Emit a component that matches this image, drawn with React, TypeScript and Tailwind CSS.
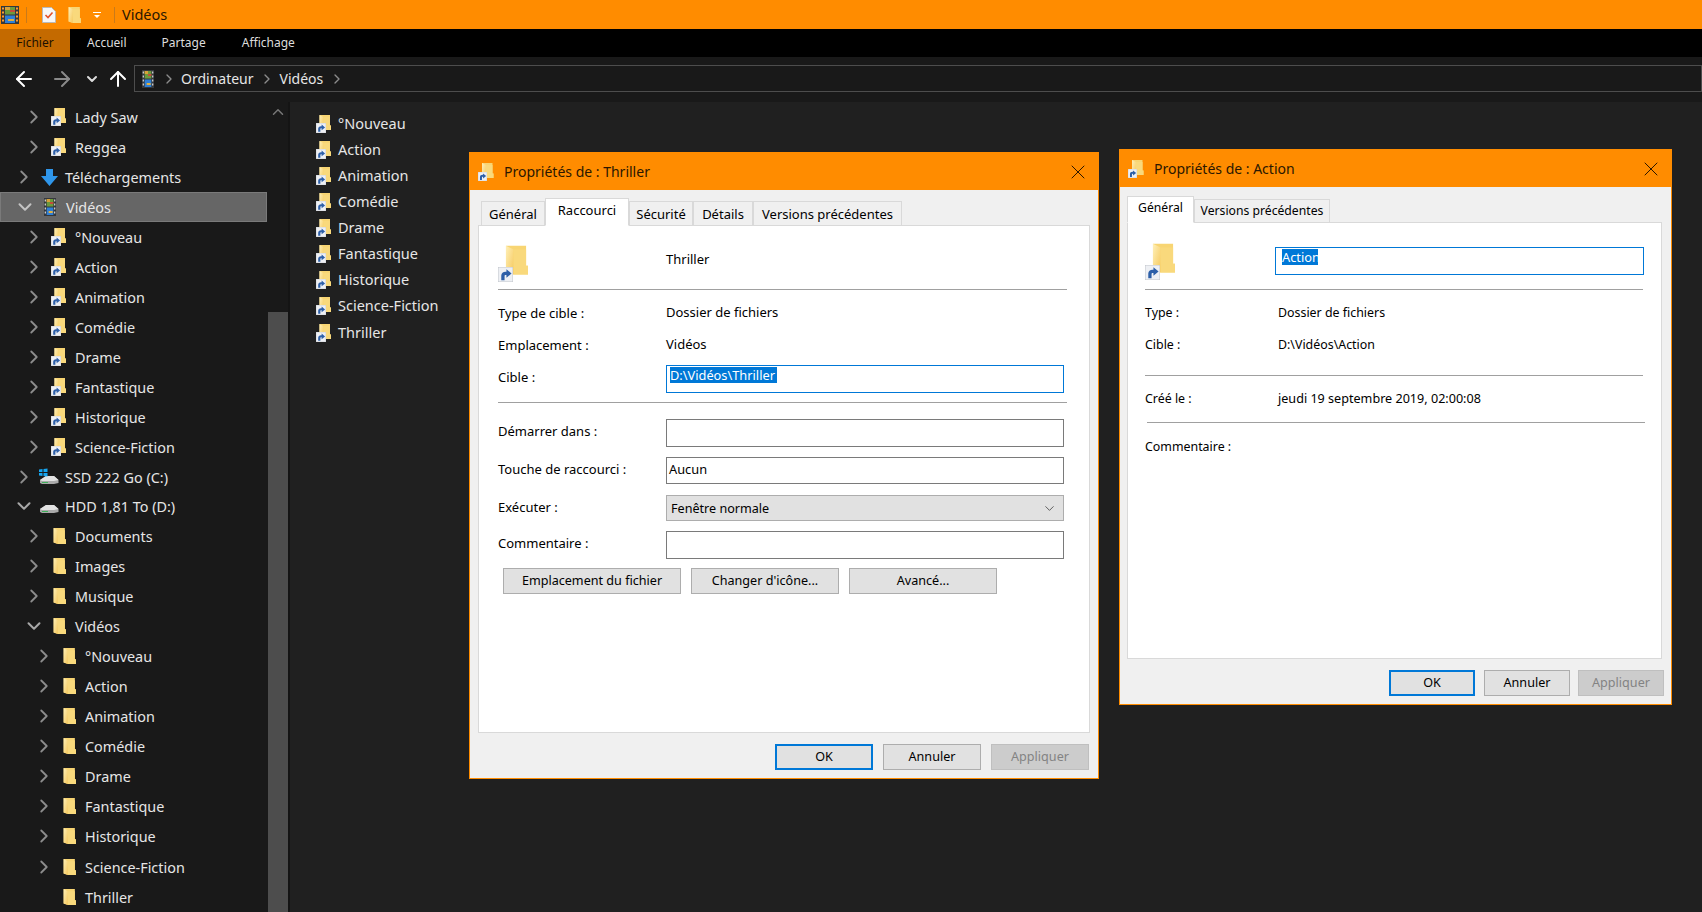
import { ArrowLeft, ArrowRight, ArrowUp, ChevronDown, ChevronRight, ChevronUp, X } from 'lucide-react';

const FONT = "font-['Noto_Sans','Open_Sans',sans-serif]";

// ── Icons ───────────────────────────────────────────────
function FolderIcon({ className }: { className: string }) {
	return (
		<svg viewBox="0 0 24 30" className={className}>
			<defs>
				<linearGradient id="fold" x1="0" x2="1" y1="0" y2="1">
					<stop offset="0" stopColor="#fff0b8" />
					<stop offset="1" stopColor="#f5c85c" />
				</linearGradient>
			</defs>
			<path d="M1 0H22V21H24V30H9L1 27Z" fill="#f8d573" />
			<path d="M1 0L9 4V30L1 27Z" fill="url(#fold)" />
			<path d="M9 4H22V21H24V30H9Z" fill="#f9d97c" />
		</svg>
	);
}

function ShortcutBadge({ className }: { className: string }) {
	return (
		<svg viewBox="0 0 16 16" className={className}>
			<rect width="16" height="16" fill="#eef0f4" stroke="#bfc3c9" />
			<path d="M3.5 14V9C3.5 6.5 5.5 5 8 5H9V2.5L14.5 7L9 11.5V8.5H8C7.3 8.5 7 9 7 10V14Z" fill="#2d5fa8" />
		</svg>
	);
}

function FolderLink() {
	return (
		<span className="relative block h-[18px] w-[16px]">
			<FolderIcon className="absolute top-0 left-[3px] h-[15px] w-[12px]" />
			<ShortcutBadge className="absolute bottom-0 left-0 h-[10px] w-[10px]" />
		</span>
	);
}

function BigFolderLink() {
	return (
		<span className="relative block h-[37px] w-[30px]">
			<FolderIcon className="absolute top-0 left-[7px] h-[30px] w-[23px]" />
			<ShortcutBadge className="absolute bottom-0 left-0 h-[15px] w-[15px]" />
		</span>
	);
}

function DialogFolderIcon() {
	return (
		<span className="relative block h-[18px] w-[16px]">
			<FolderIcon className="absolute top-0 left-[3px] h-[15px] w-[13px]" />
			<ShortcutBadge className="absolute bottom-0 left-0 h-[9px] w-[9px]" />
		</span>
	);
}

function FilmIcon({ className }: { className: string }) {
	return (
		<svg viewBox="0 0 18 18" preserveAspectRatio="none" className={className}>
			<rect width="18" height="18" fill="#35383c" />
			<rect x="4" y="1" width="10" height="7.5" fill="#6c9a3c" />
			<rect x="4" y="1" width="5" height="3" fill="#d8a13a" />
			<rect x="9" y="4" width="5" height="2" fill="#c44d3a" />
			<rect x="4" y="9.5" width="10" height="7.5" fill="#2f7fd6" />
			<rect x="7" y="13" width="6" height="2" fill="#e0b040" />
			<path d="M1 1.5h2v2H1zM1 5.5h2v2H1zM1 9.5h2v2H1zM1 13.5h2v2H1zM15 1.5h2v2h-2zM15 5.5h2v2h-2zM15 9.5h2v2h-2zM15 13.5h2v2h-2z" fill="currentColor" />
		</svg>
	);
}

function DriveIcon({ windows }: { windows?: boolean }) {
	return (
		<svg viewBox="0 0 20 18" className="h-[18px] w-[20px]">
			<path d="M1 12L7 8H15L19.5 12V15L15 16H3L1 15Z" fill="#a9a9a9" />
			<path d="M1 12L7 8H15L19.5 12L15 13H3Z" fill="#e2e2e2" />
			<path d="M3 14H9V15H3Z" fill="#3fae5a" />
			{windows && <path d="M0 1.5L3.5 1V4H0ZM4.5 1L8.5 .5V4H4.5ZM0 5H3.5V8L0 7.5ZM4.5 5H8.5V8.5L4.5 8Z" fill="#16a5f0" />}
		</svg>
	);
}

function DownloadIcon() {
	return (
		<svg viewBox="0 0 17 17" className="h-[17px] w-[17px]">
			<path d="M5 0H12V7H17L8.5 17L0 7H5Z" fill="#2f96ea" />
		</svg>
	);
}

// ── Explorer tree ───────────────────────────────────────
type Row = {
	label: string;
	level: 0 | 1 | 2;
	icon: 'link' | 'folder' | 'dl' | 'film' | 'ssd' | 'hdd';
	open?: boolean;
	leaf?: boolean;
	selected?: boolean;
	height?: string;
};

const tree: Row[] = [
	{ label: 'Lady Saw', level: 1, icon: 'link' },
	{ label: 'Reggea', level: 1, icon: 'link' },
	{ label: 'Téléchargements', level: 0, icon: 'dl' },
	{ label: 'Vidéos', level: 0, icon: 'film', open: true, selected: true },
	{ label: '°Nouveau', level: 1, icon: 'link' },
	{ label: 'Action', level: 1, icon: 'link' },
	{ label: 'Animation', level: 1, icon: 'link' },
	{ label: 'Comédie', level: 1, icon: 'link' },
	{ label: 'Drame', level: 1, icon: 'link' },
	{ label: 'Fantastique', level: 1, icon: 'link' },
	{ label: 'Historique', level: 1, icon: 'link' },
	{ label: 'Science-Fiction', level: 1, icon: 'link' },
	{ label: 'SSD 222 Go (C:)', level: 0, icon: 'ssd', height: 'h-[29px]' },
	{ label: 'HDD 1,81 To (D:)', level: 0, icon: 'hdd', open: true },
	{ label: 'Documents', level: 1, icon: 'folder' },
	{ label: 'Images', level: 1, icon: 'folder' },
	{ label: 'Musique', level: 1, icon: 'folder' },
	{ label: 'Vidéos', level: 1, icon: 'folder', open: true },
	{ label: '°Nouveau', level: 2, icon: 'folder' },
	{ label: 'Action', level: 2, icon: 'folder' },
	{ label: 'Animation', level: 2, icon: 'folder' },
	{ label: 'Comédie', level: 2, icon: 'folder' },
	{ label: 'Drame', level: 2, icon: 'folder' },
	{ label: 'Fantastique', level: 2, icon: 'folder' },
	{ label: 'Historique', level: 2, icon: 'folder' },
	{ label: 'Science-Fiction', level: 2, icon: 'folder', height: 'h-[31px]' },
	{ label: 'Thriller', level: 2, icon: 'folder', leaf: true }
];

const indent = { 0: 'pl-[13px]', 1: 'pl-[23px]', 2: 'pl-[33px]' };

function TreeRow({ row }: { row: Row }) {
	return (
		<div
			className={`flex shrink-0 items-center ${row.height ?? 'h-[30px]'} ${indent[row.level]} ${
				row.selected ? 'w-[267px] border border-[#7a7a7a] bg-[#666666] pl-[12px]' : ''
			}`}
		>
			<span className="flex w-[22px] justify-center text-[#8c8c8c]">
				{row.leaf ? null : row.open ? (
					<ChevronDown size={24} strokeWidth={2.2} className={row.selected ? 'text-[#c4c4c4]' : 'text-[#a8a8a8]'} />
				) : (
					<ChevronRight size={22} />
				)}
			</span>
			<span className="flex w-[30px] items-center justify-center pr-[2px]">
				{row.icon === 'link' && <FolderLink />}
				{row.icon === 'folder' && <FolderIcon className="h-[16px] w-[13px]" />}
				{row.icon === 'dl' && <DownloadIcon />}
				{row.icon === 'film' && <FilmIcon className="h-[18px] w-[12px] text-[#c9c9c9]" />}
				{row.icon === 'ssd' && <DriveIcon windows />}
				{row.icon === 'hdd' && <DriveIcon />}
			</span>
			<span className="mt-[2px] text-[14.4px] leading-[20px] text-[#e6e6e6]">{row.label}</span>
		</div>
	);
}

// ── Dialog parts ────────────────────────────────────────
function Tab({ label, active, className }: { label: string; active?: boolean; className: string }) {
	return (
		<div
			className={`-mb-px flex items-center justify-center border border-[#d9d9d9] text-black ${
				active ? 'z-10 border-b-white bg-white' : 'bg-[#f0f0f0]'
			} ${className}`}
		>
			{label}
		</div>
	);
}

function Btn({ label, kind, className }: { label: string; kind?: 'primary' | 'disabled'; className: string }) {
	const look =
		kind === 'primary'
			? 'border-2 border-[#0078d7] bg-[#e1e1e1] text-black'
			: kind === 'disabled'
				? 'border border-[#bfbfbf] bg-[#cccccc] text-[#838383]'
				: 'border border-[#adadad] bg-[#e1e1e1] text-black';
	return <div className={`flex h-[26px] items-center justify-center text-[12.6px] ${look} ${className}`}>{label}</div>;
}

function TitleBar({ title }: { title: string }) {
	return (
		<div className="flex h-[37px] shrink-0 items-center bg-[#ff8c00] pr-[8px] pl-[8px]">
			<DialogFolderIcon />
			<span className="ml-[10px] text-[14px] text-[#2b1700]">{title}</span>
			<X size={24} strokeWidth={1} className="ml-auto text-[#2b1700]" />
		</div>
	);
}

function Label({ children, className = '' }: { children: string; className?: string }) {
	return <span className={`block w-[168px] shrink-0 text-[13px] leading-[18px] text-black ${className}`}>{children}</span>;
}

function Field({ children }: { children?: React.ReactNode }) {
	return <div className="h-full w-[398px] border border-[#7a7a7a] bg-white pl-[2px] text-[12.8px] leading-[22px] text-black">{children}</div>;
}

function Selected({ text, width }: { text: string; width: string }) {
	return <span className={`mt-[1px] ml-[1px] block h-[16px] bg-[#0078d7] text-[12.8px] leading-[16px] text-white ${width}`}>{text}</span>;
}

function FieldRow({ label, className, children }: { label: string; className: string; children?: React.ReactNode }) {
	return (
		<div className={`flex ${className}`}>
			<Label className="pt-[3px]">{label}</Label>
			{children ?? <Field />}
		</div>
	);
}

function ThrillerDialog() {
	return (
		<div className="absolute top-[152px] left-[469px] flex h-[627px] w-[630px] flex-col border border-[#ff8c00] bg-[#f0f0f0]">
			<TitleBar title="Propriétés de : Thriller" />
			<div className="flex h-[35px] shrink-0 items-end pl-[11px] text-[13px]">
				<Tab label="Général" className="h-[25px] w-[64px] pt-[2px]" />
				<Tab label="Raccourci" active className="h-[28px] w-[84px] pb-[2px]" />
				<Tab label="Sécurité" className="h-[25px] w-[64px] pt-[2px]" />
				<Tab label="Détails" className="h-[25px] w-[60px] pt-[2px]" />
				<Tab label="Versions précédentes" className="h-[25px] w-[149px] pt-[2px]" />
			</div>
			<div className="mx-[8px] h-[508px] shrink-0 border border-[#d9d9d9] bg-white pt-[19px] pl-[19px]">
				<div className="flex h-[44px]">
					<div className="w-[168px]">
						<BigFolderLink />
					</div>
					<span className="pt-[5px] text-[13px] leading-[18px] text-black">Thriller</span>
				</div>
				<div className="h-px w-[569px] bg-[#a0a0a0]" />
				<div className="mt-[7px] flex h-[32px] items-center">
					<Label>Type de cible :</Label>
					<span className="text-[13px] text-black">Dossier de fichiers</span>
				</div>
				<div className="flex h-[32px] items-center">
					<Label>Emplacement :</Label>
					<span className="text-[13px] text-black">Vidéos</span>
				</div>
				<div className="mt-[4px] flex h-[28px]">
					<Label className="pt-[3px]">Cible :</Label>
					<div className="h-full w-[398px] border border-[#0078d7] bg-white pl-[2px]">
						<Selected text="D:\Vidéos\Thriller" width="w-[107px]" />
					</div>
				</div>
				<div className="mt-[9px] h-px w-[569px] bg-[#a0a0a0]" />
				<FieldRow label="Démarrer dans :" className="mt-[16px] h-[28px]" />
				<FieldRow label="Touche de raccourci :" className="mt-[10px] h-[27px]">
					<Field>Aucun</Field>
				</FieldRow>
				<div className="mt-[11px] flex h-[26px]">
					<Label className="pt-[3px]">Exécuter :</Label>
					<div className="flex h-full w-[398px] items-center justify-between border border-[#adadad] bg-[#e1e1e1] pr-[6px] pl-[4px] text-[12.6px] text-black">
						<span className="mt-[2px]">Fenêtre normale</span>
						<ChevronDown size={15} strokeWidth={1.2} className="text-[#333333]" />
					</div>
				</div>
				<FieldRow label="Commentaire :" className="mt-[10px] h-[28px]" />
				<div className="mt-[9px] ml-[5px] flex gap-[10px]">
					<Btn label="Emplacement du fichier" className="w-[178px]" />
					<Btn label="Changer d'icône..." className="w-[148px]" />
					<Btn label="Avancé..." className="w-[148px]" />
				</div>
			</div>
			<div className="flex justify-end gap-[10px] pt-[11px] pr-[9px]">
				<Btn label="OK" kind="primary" className="w-[98px]" />
				<Btn label="Annuler" className="w-[98px]" />
				<Btn label="Appliquer" kind="disabled" className="w-[98px]" />
			</div>
		</div>
	);
}

function ActionDialog() {
	return (
		<div className="absolute top-[149px] left-[1119px] flex h-[556px] w-[553px] flex-col border border-[#ff8c00] bg-[#f0f0f0]">
			<TitleBar title="Propriétés de : Action" />
			<div className="flex h-[35px] shrink-0 items-end pl-[7px] text-[12.2px]">
				<Tab label="Général" active className="h-[27px] w-[67px] pb-[2px]" />
				<Tab label="Versions précédentes" className="h-[24px] w-[136px]" />
			</div>
			<div className="ml-[7px] h-[437px] w-[535px] shrink-0 border border-[#d9d9d9] bg-white pt-[20px] pl-[17px]">
				<div className="flex h-[46px]">
					<div className="w-[130px]">
						<BigFolderLink />
					</div>
					<div className="mt-[4px] h-[28px] w-[369px] border border-[#0078d7] bg-white pl-[5px]">
						<Selected text="Action" width="w-[36px]" />
					</div>
				</div>
				<div className="h-px w-[498px] bg-[#a0a0a0]" />
				<div className="flex h-[47px] items-center">
					<span className="w-[133px] text-[12.4px] text-black">Type :</span>
					<span className="text-[12.4px] text-black">Dossier de fichiers</span>
				</div>
				<div className="mt-px flex h-[14px] items-center">
					<span className="w-[133px] text-[12.4px] text-black">Cible :</span>
					<span className="text-[12.4px] text-black">D:\Vidéos\Action</span>
				</div>
				<div className="mt-[23px] h-px w-[498px] bg-[#a0a0a0]" />
				<div className="flex h-[46px] items-center">
					<span className="w-[133px] text-[12.4px] text-black">Créé le :</span>
					<span className="text-[12.6px] text-black">jeudi 19 septembre 2019, 02:00:08</span>
				</div>
				<div className="ml-[2px] h-px w-[498px] bg-[#a0a0a0]" />
				<div className="mt-[15px] text-[12.4px] leading-[18px] text-black">Commentaire :</div>
			</div>
			<div className="flex justify-end gap-[8px] pt-[11px] pr-[7px]">
				<Btn label="OK" kind="primary" className="mr-px w-[86px]" />
				<Btn label="Annuler" className="w-[86px]" />
				<Btn label="Appliquer" kind="disabled" className="w-[86px]" />
			</div>
		</div>
	);
}

const shortcuts = ['°Nouveau', 'Action', 'Animation', 'Comédie', 'Drame', 'Fantastique', 'Historique', 'Science-Fiction', 'Thriller'];

export default function App() {
	return (
		<div className={`relative flex h-[912px] w-[1702px] flex-col overflow-hidden bg-[#202020] ${FONT}`}>
			{/* title bar */}
			<div className="flex h-[29px] shrink-0 items-center bg-[#ff8c00] pl-[1px]">
				<FilmIcon className="h-[18px] w-[18px] text-[#ff9c30]" />
				<span className="ml-[7px] h-[16px] w-px bg-[#c97a1a]" />
				<svg viewBox="0 0 14 16" className="ml-[15px] h-[16px] w-[14px]">
					<path d="M.5.5H9.5L13.5 4.5V15.5H.5Z" fill="#f7f7f7" stroke="#b9b9b9" />
					<path d="M3.5 8L6 10.5L10.5 5.5" fill="none" stroke="#e2512a" strokeWidth="1.6" />
				</svg>
				<FolderIcon className="ml-[12px] h-[16px] w-[13px]" />
				<svg viewBox="0 0 8 8" className="ml-[12px] h-[8px] w-[8px]">
					<path d="M0 1H8V2H0ZM1 4H7L4 7Z" fill="#fff" />
				</svg>
				<span className="ml-[13px] h-[16px] w-px bg-[#c97a1a]" />
				<span className="ml-[7px] text-[14.5px] text-[#2b1700]">Vidéos</span>
			</div>

			{/* ribbon tabs */}
			<div className="flex h-[28px] shrink-0 items-center bg-black text-[12px] text-[#dddddd]">
				<span className="flex h-full w-[70px] items-center justify-center bg-[#c46a00] text-[#1c1000]">Fichier</span>
				<span className="ml-[17px]">Accueil</span>
				<span className="ml-[35px]">Partage</span>
				<span className="ml-[36px]">Affichage</span>
			</div>

			{/* address row */}
			<div className="flex h-[45px] shrink-0 items-center bg-[#191919] pb-[2px] pl-[12px]">
				<ArrowLeft size={24} className="text-white" />
				<ArrowRight size={24} className="ml-[14px] text-[#8a8a8a]" />
				<ChevronDown size={16} strokeWidth={3} className="ml-[10px] text-[#dddddd]" />
				<ArrowUp size={24} className="ml-[6px] text-white" />
				<div className="ml-[4px] flex h-[27px] flex-1 items-center border border-[#4d4d4d] pl-[7px] text-[14px] text-[#e6e6e6]">
					<FilmIcon className="h-[18px] w-[12px] text-[#c9c9c9]" />
					<ChevronRight size={16} className="ml-[7px] text-[#8c8c8c]" />
					<span className="ml-[4px]">Ordinateur</span>
					<ChevronRight size={16} className="ml-[5px] text-[#8c8c8c]" />
					<span className="ml-[5px]">Vidéos</span>
					<ChevronRight size={16} className="ml-[6px] text-[#8c8c8c]" />
				</div>
			</div>

			{/* body */}
			<div className="flex min-h-0 flex-1">
				<div className="flex w-[268px] shrink-0 flex-col overflow-hidden bg-[#191919]">
					{tree.map((row, i) => (
						<TreeRow key={i} row={row} />
					))}
				</div>
				<div className="flex w-[20px] shrink-0 flex-col bg-[#191919]">
					<div className="flex h-[210px] justify-center pt-[1px]">
						<ChevronUp size={18} className="text-[#777777]" />
					</div>
					<div className="w-full flex-1 bg-[#4d4d4d]" />
				</div>
				<div className="w-[2px] shrink-0 bg-[#141414]" />
				<div className="flex flex-1 flex-col pt-[9px] pl-[26px]">
					{shortcuts.map((name) => (
						<div key={name} className="flex h-[26px] items-center last:mt-px">
							<FolderLink />
							<span className="ml-[6px] text-[14.5px] text-[#e6e6e6]">{name}</span>
						</div>
					))}
				</div>
			</div>

			<ThrillerDialog />
			<ActionDialog />
		</div>
	);
}
